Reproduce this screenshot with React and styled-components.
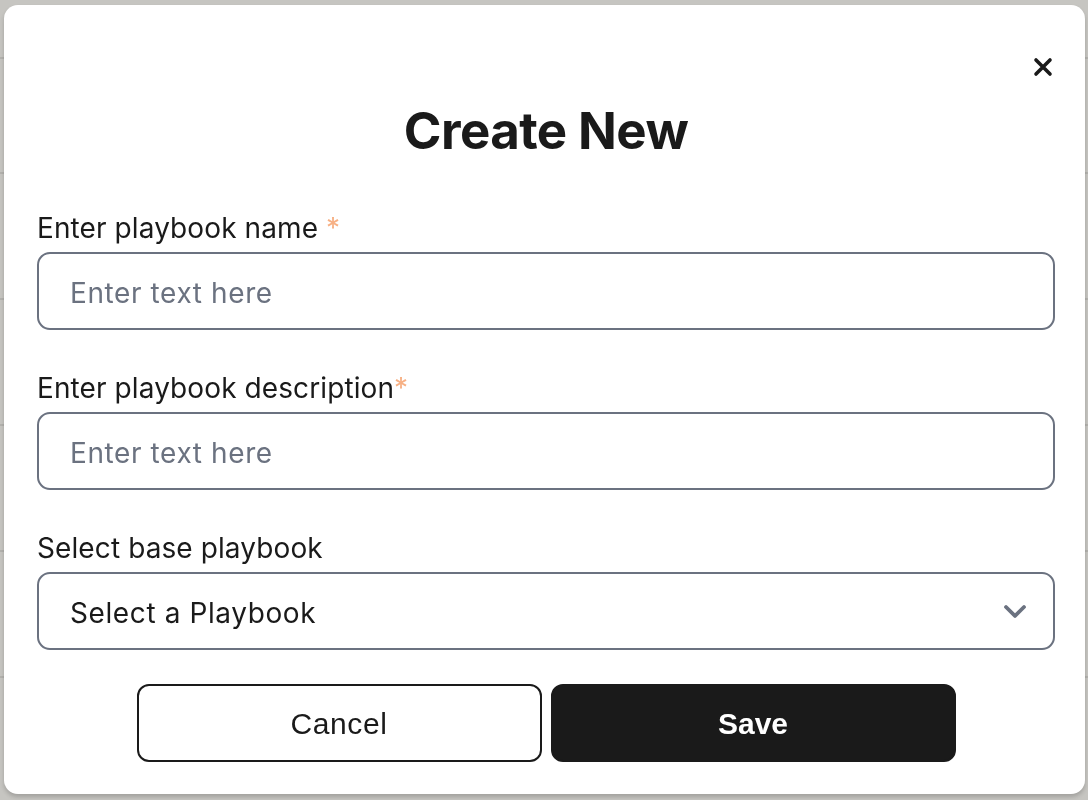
import styled, { createGlobalStyle } from 'styled-components';

const GlobalStyle = createGlobalStyle`
  * { box-sizing: border-box; }
  html, body {
    margin: 0;
    padding: 0;
    height: 100%;
    background: #c6c5c1;
    font-family: 'Inter', 'Noto Sans', sans-serif;
    color: #1a1a1a;
  }
`;

const rows = [0, 1, 2, 3, 4, 5];

const App = () => {
  return (
    <>
      <GlobalStyle />
      <Page>
        {rows.map((r) => (
          <PageRow key={r} first={r === 0} />
        ))}
      </Page>
      <Overlay>
        <Modal>
          <CloseButton aria-label='Close'>
            <svg width='20' height='20' viewBox='0 0 20 20'>
              <path d='M3 3 L17 17 M17 3 L3 17' stroke='#1a1a1a' strokeWidth='3.6' strokeLinecap='round' />
            </svg>
          </CloseButton>
          <Title>Create New</Title>
          <Form>
            <Field>
              <Label>
                Enter playbook name <Required>*</Required>
              </Label>
              <Input placeholder='Enter text here' />
            </Field>
            <Field>
              <Label>
                Enter playbook description<Required>*</Required>
              </Label>
              <Input placeholder='Enter text here' />
            </Field>
            <Field>
              <Label>Select base playbook</Label>
              <SelectBox type='button'>
                <span>Select a Playbook</span>
                <svg width='24' height='15' viewBox='0 0 24 15'>
                  <path d='M3 3 L12 12 L21 3' fill='none' stroke='#6b7280' strokeWidth='3.8' strokeLinecap='round' strokeLinejoin='round' />
                </svg>
              </SelectBox>
            </Field>
          </Form>
          <Actions>
            <Button>Cancel</Button>
            <Button primary>Save</Button>
          </Actions>
        </Modal>
      </Overlay>
    </>
  );
};

const Page = styled.div`
  display: flex;
  flex-direction: column;
  padding-top: 57px;
`;

const PageRow = styled.div`
  height: ${(props) => (props.first ? '115px' : '126px')};
  border-top: 2px solid #b3b2ae;
`;

const Overlay = styled.div`
  position: fixed;
  inset: 0;
  display: flex;
  padding: 5px 3px 6px 4px;
`;

const Modal = styled.div`
  position: relative;
  flex: 1;
  background: #ffffff;
  border-radius: 14px;
  box-shadow: 0 3px 4px rgba(0, 0, 0, 0.18);
  padding: 96px 30px 32px 33px;
  display: flex;
  flex-direction: column;
`;

const CloseButton = styled.button`
  position: absolute;
  top: 52px;
  right: 32px;
  width: 20px;
  height: 20px;
  padding: 0;
  border: none;
  background: none;
  display: flex;
  cursor: pointer;
`;

const Title = styled.h1`
  margin: 0;
  text-align: center;
  font-size: 51px;
  line-height: 60px;
  font-weight: 700;
  letter-spacing: -0.6px;
  color: #1a1a1a;
`;

const Form = styled.div`
  display: flex;
  flex-direction: column;
  gap: 41px;
  margin-top: 50px;
`;

const Field = styled.div`
  display: flex;
  flex-direction: column;
  gap: 6px;
`;

const Label = styled.label`
  font-size: 28px;
  line-height: 35px;
  color: #1a1a1a;
  letter-spacing: 0.1px;
`;

const Required = styled.span`
  color: #f7b084;
`;

const Input = styled.input`
  height: 78px;
  border: 2px solid #6b7280;
  border-radius: 13px;
  padding: 4px 31px 0;
  font-family: 'Inter', sans-serif;
  font-size: 28px;
  letter-spacing: 0.6px;
  color: #1a1a1a;
  outline: none;
  background: #fff;

  &::placeholder {
    color: #6b7280;
  }
`;

const SelectBox = styled.button`
  height: 78px;
  border: 2px solid #6b7280;
  border-radius: 13px;
  padding: 4px 26px 0 31px;
  display: flex;
  align-items: center;
  justify-content: space-between;
  background: #fff;
  font-family: 'Inter', sans-serif;
  font-size: 28px;
  letter-spacing: 0.6px;
  color: #1a1a1a;
  cursor: pointer;

  svg {
    margin-top: -4px;
  }
`;

const Actions = styled.div`
  display: flex;
  justify-content: center;
  gap: 9px;
  margin-top: 34px;
`;

const Button = styled.button`
  width: 405px;
  height: 78px;
  border-radius: 12px;
  border: 2px solid #1a1a1a;
  background: ${(props) => (props.primary ? '#1a1a1a' : '#ffffff')};
  color: ${(props) => (props.primary ? '#ffffff' : '#1a1a1a')};
  font-family: 'Liberation Sans', Arial, sans-serif;
  font-size: 30px;
  letter-spacing: ${(props) => (props.primary ? '0' : '0.6px')};
  font-weight: ${(props) => (props.primary ? 700 : 400)};
  padding-top: 3px;
  cursor: pointer;
`;

export default App;
